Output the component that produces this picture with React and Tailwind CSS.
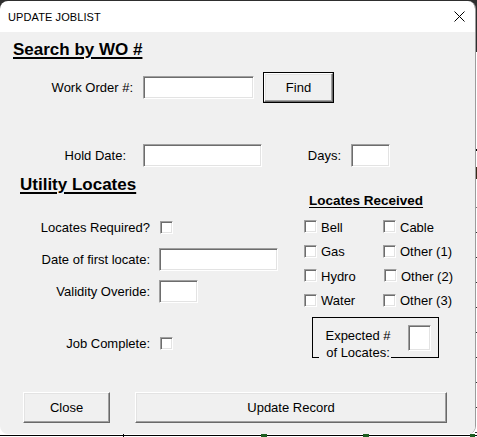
import React from "react";

const sunken =
  "bg-white border border-t-[#a0a0a0] border-l-[#a0a0a0] border-b-white border-r-white shadow-[inset_1px_1px_#6d6d6d,inset_-1px_-1px_#e3e3e3]";
const raised =
  "bg-[#f0f0f0] border border-t-white border-l-white border-b-[#696969] border-r-[#696969] shadow-[inset_-1px_-1px_#a0a0a0,inset_1px_1px_#e3e3e3]";

function Input({ w, h = "h-[23px]" }) {
  return <div className={`${sunken} ${w} ${h} shrink-0`} />;
}

function Check() {
  return <div className={`${sunken} w-[13px] h-[13px] shrink-0`} />;
}

function CheckItem({ label, extra = "" }) {
  return (
    <div className={`flex items-center gap-[4px] ${extra}`}>
      <Check />
      <span className="leading-[16px] translate-y-[1px] whitespace-nowrap">{label}</span>
    </div>
  );
}

export default function App() {
  const ticks = Array.from({ length: 9 });
  return (
    <div className="relative w-[477px] h-[437px] overflow-hidden bg-white font-['Liberation_Sans',Arial,sans-serif] text-black">
      {/* desktop / spreadsheet behind */}
      <div className="absolute inset-0 flex flex-col">
        <div className="h-[52px] bg-[#2e2e2e]" />
        <div className="flex-1 bg-white" />
      </div>
      <div className="absolute right-0 top-[52px] w-[2px] flex flex-col">
        <div className="h-[99px] border-b-2 border-black" />
        <div className="h-[16px]" />
        <div className="h-[12px] bg-[#3a2a1a]" />
        <div className="h-[29px] border-b border-[#777]" />
        {ticks.map((_, i) => (
          <div key={i} className="h-[25px] border-b border-[#333]" />
        ))}
      </div>
      <div className="absolute left-0 bottom-[1px] w-full h-[1px] bg-black" />
      <div className="absolute left-[123px] bottom-0 w-[1px] h-[3px] bg-black" />
      <div className="absolute left-[261px] bottom-0 w-[6px] h-[3px] bg-[#1b5e20]" />
      <div className="absolute left-[363px] bottom-0 w-[6px] h-[3px] bg-[#1b5e20]" />
      <div className="absolute left-[470px] bottom-0 w-[5px] h-[3px] bg-[#1b5e20]" />

      {/* dialog window */}
      <div className="absolute left-0 top-[1px] w-[476px] h-[433px] rounded-[8px] overflow-hidden border-r border-[#9c9c9c] flex flex-col">
        <div className="h-[31px] bg-white flex items-center justify-between pl-[8px] pr-[10px] shrink-0">
          <span className="text-[11px] leading-[14px] tracking-[0.1px]">UPDATE JOBLIST</span>
          <svg width="11" height="11" viewBox="0 0 11 11" className="translate-y-[0px]">
            <path d="M0.5 0.5 L10.5 10.5 M10.5 0.5 L0.5 10.5" stroke="#000" strokeWidth="1" fill="none" />
          </svg>
        </div>

        <div className="flex-1 bg-[#f0f0f0] flex flex-col text-[13px]">
          {/* Search by WO */}
          <div className="pt-[8px] pl-[13px] leading-[20px] text-[17px] font-bold underline decoration-[1.5px] underline-offset-[2px]">
            Search by WO #
          </div>

          <div className="mt-[12px] h-[31px] flex items-center">
            <div className="w-[133px] text-right whitespace-nowrap">Work Order #:</div>
            <div className="ml-[10px]">
              <Input w="w-[111px]" />
            </div>
            <div className="ml-[9px] w-[71px] h-[31px] border border-black flex">
              <div className={`${raised} flex-1 flex items-center justify-center`}>Find</div>
            </div>
          </div>

          <div className="mt-[41px] h-[23px] flex items-center">
            <div className="w-[126px] text-right whitespace-nowrap">Hold Date:</div>
            <div className="ml-[17px]">
              <Input w="w-[119px]" />
            </div>
            <div className="w-[79px] text-right">Days:</div>
            <div className="ml-[10px]">
              <Input w="w-[39px]" />
            </div>
          </div>

          {/* lower section */}
          <div className="h-[225px] flex">
            <div className="w-[304px] flex flex-col">
              <div className="pt-[8px] pl-[20px] leading-[20px] text-[17px] font-bold underline decoration-[1.5px] underline-offset-[2px]">
                Utility Locates
              </div>
              <div className="mt-[26px] h-[13px] flex items-center">
                <div className="w-[150px] text-right whitespace-nowrap">Locates Required?</div>
                <div className="ml-[10px]">
                  <Check />
                </div>
              </div>
              <div className="mt-[14px] h-[23px] flex items-center">
                <div className="w-[150px] text-right whitespace-nowrap">Date of first locate:</div>
                <div className="ml-[9px]">
                  <Input w="w-[119px]" />
                </div>
              </div>
              <div className="mt-[9px] h-[23px] flex items-center">
                <div className="w-[150px] text-right whitespace-nowrap">Validity Overide:</div>
                <div className="ml-[9px]">
                  <Input w="w-[39px]" />
                </div>
              </div>
              <div className="mt-[34px] h-[13px] flex items-center">
                <div className="w-[150px] text-right whitespace-nowrap">Job Complete:</div>
                <div className="ml-[10px]">
                  <Check />
                </div>
              </div>
            </div>

            <div className="flex flex-col">
              <div className="mt-[26px] pl-[5px] leading-[16px] text-[13.5px] font-bold underline underline-offset-[2px]">
                Locates Received
              </div>
              <div className="mt-[11px] flex flex-col gap-[11.5px]">
                <div className="h-[13px] flex items-center">
                  <div className="w-[79px]"><CheckItem label="Bell" /></div>
                  <CheckItem label="Cable" />
                </div>
                <div className="h-[13px] flex items-center">
                  <div className="w-[79px]"><CheckItem label="Gas" /></div>
                  <CheckItem label="Other (1)" />
                </div>
                <div className="h-[13px] flex items-center">
                  <div className="w-[79px]"><CheckItem label="Hydro" /></div>
                  <CheckItem label="Other (2)" extra="ml-[1px]" />
                </div>
                <div className="h-[13px] flex items-center">
                  <div className="w-[79px]"><CheckItem label="Water" /></div>
                  <CheckItem label="Other (3)" />
                </div>
              </div>
              <div className="mt-[10.5px] ml-[8px] w-[127px] h-[41px] border border-black relative flex justify-end pt-[7px] pr-[7px]">
                <div className="absolute left-[6px] top-[9px] w-[72px] h-[34px] bg-[#f0f0f0] pl-[6px] text-center leading-[17px] whitespace-nowrap">
                  Expected #
                  <br />
                  of Locates:
                </div>
                <Input w="w-[23px]" h="h-[26px]" />
              </div>
            </div>
          </div>

          {/* buttons */}
          <div className="h-[31px] flex pl-[23px] gap-[25px]">
            <div className={`${raised} w-[87px] flex items-center justify-center`}>Close</div>
            <div className={`${raised} w-[312px] flex items-center justify-center`}>Update Record</div>
          </div>
        </div>
      </div>
    </div>
  );
}
